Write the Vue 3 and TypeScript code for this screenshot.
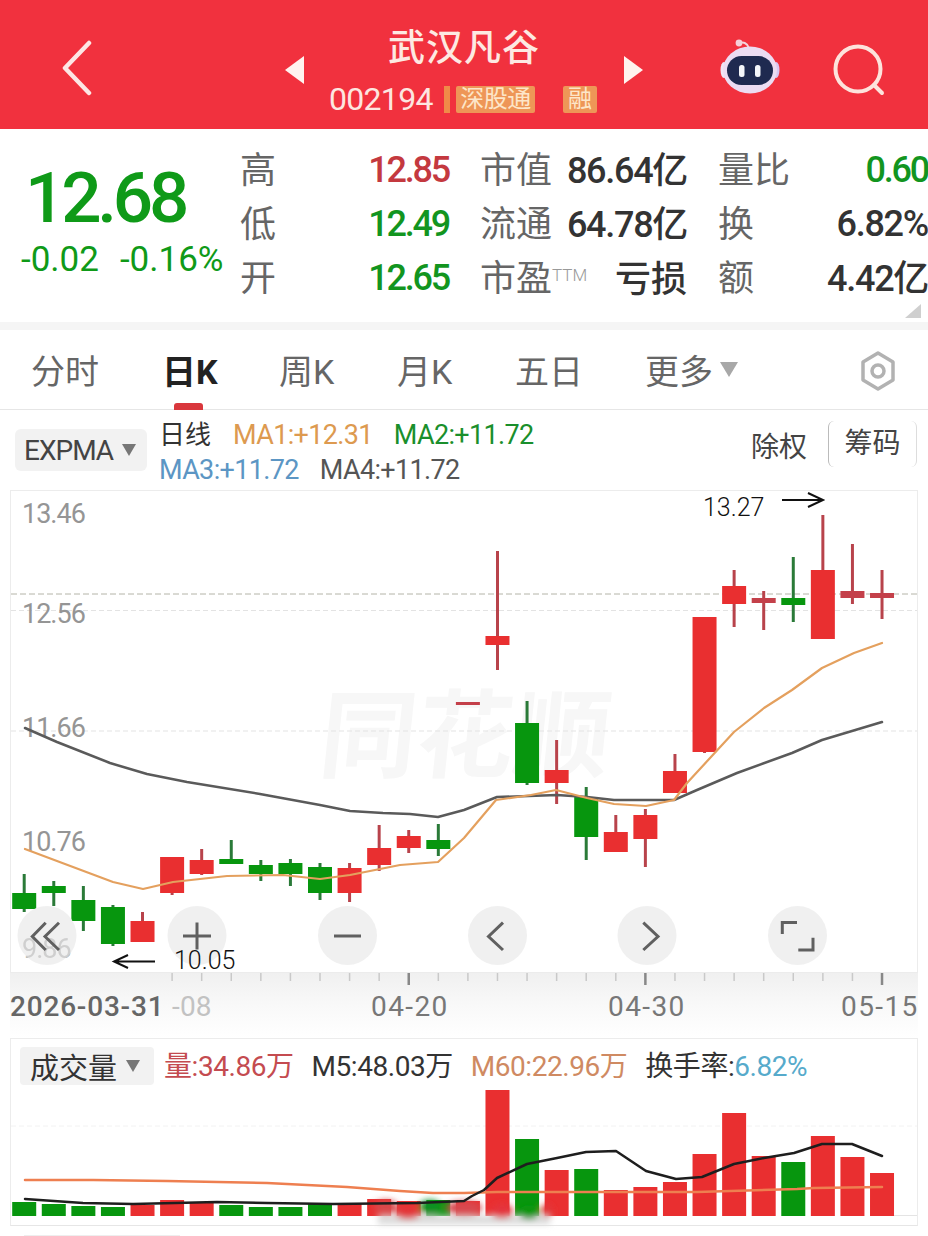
<script setup lang="ts">
type Kind = "up" | "down";
// [kind, wick top, body top, body bottom, wick bottom], page y coordinates
type Candle = [Kind, number, number, number, number];

const candles: Candle[] = [
  ["down", 874, 893, 909, 912],
  ["down", 881, 886, 893, 906],
  ["down", 886, 900, 921, 931],
  ["down", 905, 907, 944, 946],
  ["up", 912, 921, 942, 942],
  ["up", 857, 857, 893, 895],
  ["up", 849, 860, 874, 875],
  ["down", 840, 859, 864, 864],
  ["down", 860, 865, 874, 881],
  ["down", 859, 863, 874, 886],
  ["down", 863, 867, 893, 900],
  ["up", 863, 868, 893, 902],
  ["up", 825, 848, 865, 871],
  ["up", 830, 836, 848, 853],
  ["down", 824, 840, 849, 856],
  ["up", 702, 702, 705, 705],
  ["up", 551, 636, 645, 670],
  ["down", 701, 723, 783, 785],
  ["up", 740, 770, 783, 804],
  ["down", 787, 797, 837, 860],
  ["up", 815, 832, 852, 852],
  ["up", 809, 815, 839, 867],
  ["up", 754, 771, 793, 793],
  ["up", 617, 617, 752, 753],
  ["up", 570, 586, 604, 627],
  ["up", 591, 598, 603, 630],
  ["down", 557, 598, 605, 622],
  ["up", 515, 570, 639, 639],
  ["up", 544, 591, 598, 604],
  ["up", 570, 593, 598, 619],
];

const volumeTops = [
  1202, 1204, 1206, 1207, 1205, 1200, 1203, 1205, 1207, 1207, 1204, 1203, 1199, 1201, 1200, 1201,
  1090, 1139, 1170, 1169, 1190, 1187, 1182, 1154, 1113, 1156, 1162, 1136, 1157, 1173,
];
const volumeDown = new Set([0, 1, 2, 3, 7, 8, 9, 10, 14, 17, 19, 26]);

const step = 29.58;
const candleX = (i: number) => 24.2 + step * i;

const expOrange =
  "25,849 113,882 143,889 173,882 227,876 283,875 320,879 350,875 400,865 438,862 464,838 496,800 531,795 556,790 587,798 614,804 646,806 674,800 687,783 734,732 764,708 792,690 822,668 854,653 882,643";
const expGray =
  "25,728 57,742 110,763 147,774 187,782 260,794 320,805 350,811 383,813 410,814 438,817 464,810 497,797 557,795 587,797 614,800 674,800 697,790 737,773 792,753 822,740 882,722";
const volOrange =
  "25,1180 93,1180 167,1181 267,1183 347,1187 400,1191 433,1193 464,1193 497,1192 597,1192 697,1192 797,1189 814,1188 882,1187";
const volBlack =
  "25,1199 83,1203 133,1204 217,1202 267,1203 333,1204 417,1203 464,1201 472,1196 484,1190 497,1178 527,1164 557,1158 586,1152 616,1151 646,1171 676,1179 702,1177 734,1164 764,1158 794,1153 822,1144 852,1144 882,1156";

const priceLabels = [
  { text: "13.46", y: 523 },
  { text: "12.56", y: 623 },
  { text: "11.66", y: 737 },
  { text: "10.76", y: 851 },
];

const circleButtons = [47, 197, 347.5, 497.5, 647, 797.5];

const stats = [
  { label: "高", value: "12.85", tone: "red" },
  { label: "市值", value: "86.64亿", tone: "yi" },
  { label: "量比", value: "0.60", tone: "green" },
  { label: "低", value: "12.49", tone: "green" },
  { label: "流通", value: "64.78亿", tone: "yi" },
  { label: "换", value: "6.82%", tone: "dark" },
  { label: "开", value: "12.65", tone: "green" },
  { label: "市盈", sup: "TTM", value: "亏损", tone: "loss" },
  { label: "额", value: "4.42亿", tone: "yi" },
];

const tabs = [
  { text: "分时" },
  { text: "日K", active: true },
  { text: "周K" },
  { text: "月K" },
  { text: "五日" },
  { text: "更多", caret: true },
];

const ticks = Array.from({ length: 25 }, (_, i) => i + 5);
const majorTicks = new Set([13, 21, 29]);
</script>

<template>
  <div class="page">
    <header class="topbar">
      <div class="topbar__left">
        <svg class="back" width="34" height="56" viewBox="0 0 34 56">
          <path d="M29 3 5 28l24 25" fill="none" stroke="#fde6e4" stroke-width="4.5" stroke-linecap="round" stroke-linejoin="round" />
        </svg>
      </div>
      <div class="stock">
        <span class="tri tri--left" />
        <div class="stock__stack">
          <div class="stock__name">武汉凡谷</div>
          <div class="stock__meta">
            <span class="stock__code">002194</span>
            <span class="stock__bar" />
            <span class="tag tag--wide">深股通</span>
            <span class="tag tag--short">融</span>
          </div>
        </div>
        <span class="tri tri--right" />
      </div>
      <div class="topbar__right">
        <svg class="robot" width="62" height="58" viewBox="0 0 62 58">
          <path d="M20 6c4-3 8-1 10 4" fill="none" stroke="#f3d4dc" stroke-width="2" />
          <circle cx="20" cy="5" r="3.4" fill="#f6cfd8" />
          <ellipse cx="5" cy="32" rx="3.5" ry="8" fill="#f0e4f4" />
          <ellipse cx="57" cy="32" rx="3.5" ry="8" fill="#d9c6f2" />
          <ellipse cx="31" cy="32" rx="27" ry="23.5" fill="#ecdcf2" />
          <rect x="8" y="18" width="46" height="29" rx="14.5" fill="#1f2a50" />
          <rect x="20" y="27" width="5.5" height="12" rx="2.5" fill="#f4f6fa" />
          <rect x="36" y="27" width="5.5" height="12" rx="2.5" fill="#f4f6fa" />
        </svg>
        <svg class="search" width="54" height="52" viewBox="0 0 54 52">
          <circle cx="26" cy="25" r="22.5" fill="none" stroke="#fde3dc" stroke-width="4" />
          <path d="M42 41 50 49" stroke="#fde3dc" stroke-width="4" stroke-linecap="round" />
        </svg>
      </div>
    </header>

    <section class="quote">
      <div class="quote__price">
        <div class="quote__last">12.68</div>
        <div class="quote__change">
          <span>-0.02</span>
          <span>-0.16%</span>
        </div>
      </div>
      <div class="stats">
        <div v-for="s in stats" :key="s.label" class="stat">
          <span class="stat__label">{{ s.label }}<sup v-if="s.sup">{{ s.sup }}</sup></span>
          <span class="stat__value" :class="'tone-' + s.tone">{{ s.value }}</span>
        </div>
      </div>
      <span class="quote__corner" />
    </section>

    <nav class="tabs">
      <div v-for="t in tabs" :key="t.text" class="tab" :class="{ 'tab--active': t.active }">
        {{ t.text }}<span v-if="t.caret" class="caret caret--tab" />
      </div>
      <svg class="gear" width="40" height="40" viewBox="0 0 40 40">
        <path d="M20 2 35 11v18l-15 9-15-9V11Z" fill="none" stroke="#b2b2b2" stroke-width="3.5" stroke-linejoin="round" />
        <circle cx="20" cy="20" r="6" fill="none" stroke="#b2b2b2" stroke-width="3.5" />
      </svg>
    </nav>

    <div class="legend">
      <div class="select select--exp">EXPMA<span class="caret" /></div>
      <div class="legend__lines">
        <div class="legend__row">
          <span class="legend__cn">日线</span>
          <span class="c-orange">MA1:+12.31</span>
          <span class="c-green">MA2:+11.72</span>
        </div>
        <div class="legend__row">
          <span class="c-blue">MA3:+11.72</span>
          <span class="c-gray">MA4:+11.72</span>
        </div>
      </div>
      <div class="legend__right">
        <span class="legend__adj">除权</span>
        <span class="legend__chip">筹码</span>
      </div>
    </div>

    <div class="panel panel--kline">
      <svg class="plot" width="906" height="481" viewBox="11 491 906 481">
        <text x="318" y="770" class="watermark" textLength="290" lengthAdjust="spacingAndGlyphs" transform="skewX(-6) translate(80 0)">同花顺</text>

        <line x1="11" x2="917" y1="594" y2="594" class="grid grid--last" />
        <line x1="11" x2="917" y1="610.5" y2="610.5" class="grid" />
        <line x1="11" x2="917" y1="731" y2="731" class="grid" />

        <text v-for="p in priceLabels" :key="p.text" x="22" :y="p.y" class="axis-price">{{ p.text }}</text>
        <text x="22" y="958" class="axis-price axis-price--faded">9.86</text>

        <g v-for="(c, i) in candles" :key="i" :class="c[0]">
          <line :x1="candleX(i)" :x2="candleX(i)" :y1="c[1]" :y2="c[4]" class="wick" />
          <rect
            :x="candleX(i) - 12"
            :y="c[2]"
            width="24"
            :height="c[3] - c[2]"
            class="body"
            :class="{ 'body--thin': c[3] - c[2] < 8 }"
          />
        </g>

        <polyline :points="expGray" class="line line--gray" />
        <polyline :points="expOrange" class="line line--orange" />

        <g v-for="x in circleButtons" :key="x">
          <circle :cx="x" cy="935.5" r="29.5" class="btn-circle" />
        </g>
        <text x="22" y="958" class="axis-price axis-price--over">9.86</text>
        <g class="btn-icon">
          <path d="M45.7 922.7 32.3 936.5 45.7 950M59 922.7 45 936.5 59 950" />
          <path d="M183 936h28M197 922.5v27" />
          <path d="M334 936h27" />
          <path d="M503 922.7 488.5 936.5 503 950" />
          <path d="M643.3 922.7 658 936.5 643.3 950" />
          <path d="M782.3 934V922.5H797M798.3 950H813V937.7" />
        </g>

        <text x="703" y="516" class="note">13.27</text>
        <path d="M782 500h40M808 493l15 7-15 7" class="note-arrow" />
        <text x="174" y="968.5" class="note">10.05</text>
        <path d="M155 961.5h-40M128 955l-14 6.5 14 6.5" class="note-arrow" />
      </svg>
    </div>

    <div class="xaxis">
      <svg width="908" height="65" viewBox="10 973 908 65">
        <line
          v-for="i in ticks"
          :key="i"
          :x1="candleX(i)"
          :x2="candleX(i)"
          y1="973"
          :y2="majorTicks.has(i) ? 985 : 981"
          :class="majorTicks.has(i) ? 'tick tick--major' : 'tick'"
        />
        <text x="10" y="1016" class="date date--first">2026-03-31</text>
        <text x="172" y="1016" class="date date--faded">-08</text>
        <text x="371" y="1016" class="date">04-20</text>
        <text x="608" y="1016" class="date">04-30</text>
        <text x="841" y="1016" class="date">05-15</text>
      </svg>
    </div>

    <div class="panel panel--volume">
      <div class="vol-head">
        <div class="select select--vol">成交量<span class="caret" /></div>
        <div class="vol-head__items">
          <span class="c-volred">量:34.86万</span>
          <span class="c-dark">M5:48.03万</span>
          <span class="c-volorange">M60:22.96万</span>
          <span class="c-dark">换手率:<span class="c-turn">6.82%</span></span>
        </div>
      </div>
      <svg class="plot" width="906" height="136" viewBox="11 1089 906 136">
        <defs>
          <filter id="smudge" x="-20%" y="-60%" width="140%" height="220%">
            <feGaussianBlur stdDeviation="3" />
          </filter>
        </defs>
        <line x1="11" x2="917" y1="1126" y2="1126" class="grid grid--soft" />
        <line x1="880" x2="917" y1="1215.5" y2="1215.5" class="grid-base" />
        <rect
          v-for="(top, i) in volumeTops"
          :key="i"
          :x="candleX(i) - 12"
          :y="top"
          width="24"
          :height="1216 - top"
          :fill="volumeDown.has(i) ? '#07960e' : '#e92f30'"
        />
        <g filter="url(#smudge)">
          <rect x="378" y="1216" width="172" height="8" fill="#d8d8d8" />
          <ellipse cx="386" cy="1207" rx="12" ry="7" fill="#d9484c" />
          <ellipse cx="408" cy="1213" rx="12" ry="6" fill="#e2383a" />
          <ellipse cx="430" cy="1207" rx="11" ry="7" fill="#0e8f24" />
          <ellipse cx="464" cy="1208" rx="18" ry="7" fill="#d84a50" />
          <ellipse cx="502" cy="1211" rx="11" ry="7" fill="#e4363c" />
          <ellipse cx="529" cy="1212" rx="10" ry="7" fill="#07960e" />
          <ellipse cx="547" cy="1210" rx="6" ry="6" fill="#e2383a" />
        </g>
        <polyline :points="volOrange" class="line line--vol-orange" />
        <polyline :points="volBlack" class="line line--vol-black" />
      </svg>
    </div>
    <div class="next-edge" />
  </div>
</template>

<style>
html,
body {
  margin: 0;
  background: #fff;
}
</style>

<style scoped>
.page {
  width: 928px;
  height: 1236px;
  overflow: hidden;
  position: relative;
  background: #fff;
  font-family: Roboto, "Noto Sans CJK SC", sans-serif;
  color: #333;
}

.topbar {
  height: 129px;
  background: #f1313e;
  display: grid;
  grid-template-columns: 1fr auto 1fr;
  align-items: flex-start;
}

.topbar__left {
  padding: 40px 0 0 60px;
}

.topbar__right {
  display: flex;
  justify-content: flex-end;
  gap: 51px;
  padding: 38px 42px 0 0;
}

.back,
.robot,
.search {
  display: block;
}

.search {
  margin-top: 6px;
}

.stock {
  display: flex;
  align-items: center;
  gap: 27px;
  margin-top: 26px;
}

.tri {
  width: 0;
  height: 0;
  border-top: 14px solid transparent;
  border-bottom: 14px solid transparent;
}

.tri--left {
  border-right: 19px solid #fff3ef;
}

.tri--right {
  border-left: 19px solid #fff3ef;
}

.stock__stack {
  width: 266px;
}

.stock__name {
  height: 42px;
  line-height: 46px;
  margin-bottom: 18px;
  text-align: center;
  color: #fde9e2;
  font-size: 37px;
  font-weight: 500;
  letter-spacing: 1px;
  white-space: nowrap;
}

.stock__meta {
  display: flex;
  align-items: center;
  height: 27px;
}

.stock__code {
  color: #fde6e0;
  font-size: 32px;
  line-height: 27px;
  letter-spacing: -0.7px;
  width: 113px;
  margin-left: -2px;
  padding-right: 2px;
}

.stock__bar {
  width: 6px;
  height: 27px;
  background: #f08a48;
  margin-right: 6px;
}

.tag {
  height: 27px;
  line-height: 27px;
  text-align: center;
  background: #ee9657;
  color: #fde6c9;
  font-size: 24px;
  border-radius: 2px;
}

.tag--wide {
  width: 79px;
  letter-spacing: -0.5px;
  white-space: nowrap;
  margin-right: 28px;
}

.tag--short {
  width: 34px;
}

.quote {
  position: relative;
  height: 193px;
  display: flex;
  border-bottom: 8px solid #f5f5f5;
}

.quote__price {
  width: 241px;
  flex: none;
  color: #0f9a18;
}

.quote__last {
  margin: 34px 0 0 25px;
  height: 70px;
  line-height: 70px;
  font-size: 71px;
  font-weight: 500;
  letter-spacing: -4.2px;
}

.quote__change {
  display: flex;
  gap: 21px;
  margin: 7px 0 0 21px;
  height: 40px;
  line-height: 40px;
  font-size: 35px;
  white-space: nowrap;
}

.stats {
  display: grid;
  grid-template-columns: 208px 206px 209px;
  grid-auto-rows: 54px;
  column-gap: 32px;
  padding-top: 14px;
}

.stat {
  display: flex;
  align-items: center;
  justify-content: space-between;
  white-space: nowrap;
}

.stat__label {
  font-size: 36px;
  color: #666;
  margin-bottom: 7px;
  margin-left: -1px;
}

.stat__label sup {
  font-size: 17px;
  font-weight: 300;
  color: #999;
  vertical-align: 10px;
  line-height: 0;
}

.stat__value {
  font-size: 36px;
  font-weight: 500;
  letter-spacing: -2.2px;
}

.tone-red {
  color: #c4393f;
}

.tone-green {
  color: #12951f;
}

.tone-dark {
  color: #333;
  letter-spacing: -1.3px;
}

.tone-yi {
  color: #333;
  letter-spacing: -1.3px;
  margin-bottom: 7px;
}

.tone-loss {
  color: #333;
  letter-spacing: 0;
  margin-bottom: 4px;
}

.quote__corner {
  position: absolute;
  right: 7px;
  bottom: 4px;
  width: 0;
  height: 0;
  border-left: 16px solid transparent;
  border-bottom: 14px solid #cfcfcf;
}

.tabs {
  position: relative;
  display: grid;
  grid-template-columns: 131px 117px 118px 118px 130px 1fr;
  height: 80px;
  padding-left: 31px;
  align-items: center;
  box-sizing: border-box;
  border-bottom: 1px solid #e6e6e6;
  font-size: 34px;
  color: #666;
}

.tab {
  position: relative;
  white-space: nowrap;
  display: flex;
  align-items: center;
  margin-top: -1px;
}

.tab--active {
  color: #222;
  font-weight: 700;
}

.tab--active::after {
  content: "";
  position: absolute;
  left: 12px;
  bottom: -16px;
  width: 29px;
  height: 7px;
  border-radius: 3px 3px 0 0;
  background: #d9373c;
}

.caret {
  display: inline-block;
  width: 0;
  height: 0;
  border-left: 7.5px solid transparent;
  border-right: 7.5px solid transparent;
  border-top: 12px solid #777;
}

.caret--tab {
  margin-left: 7px;
  border-left-width: 9px;
  border-right-width: 9px;
  border-top: 15px solid #a8a8a8;
}

.gear {
  position: absolute;
  left: 858px;
  top: 21px;
}

.legend {
  height: 80px;
  display: flex;
  position: relative;
}

.select {
  display: flex;
  align-items: center;
  background: #f2f2f2;
  border-radius: 6px;
  white-space: nowrap;
  box-sizing: border-box;
}

.select--exp {
  width: 132px;
  height: 42px;
  margin: 19px 0 0 15px;
  padding-left: 9px;
  font-size: 28px;
  letter-spacing: -1px;
  color: #444;
  gap: 9px;
}

.legend__lines {
  margin-left: 12px;
  padding-top: 7px;
  font-size: 27px;
  letter-spacing: -0.65px;
}

.legend__row {
  display: flex;
  gap: 21px;
  height: 36px;
  line-height: 36px;
  white-space: nowrap;
}

.legend__row + .legend__row {
  height: 34px;
  line-height: 34px;
}

.legend__cn {
  color: #333;
  font-size: 26px;
  letter-spacing: 0;
  margin-right: 1px;
}

.c-orange {
  color: #dd9a50;
}

.c-green {
  color: #1a8f2c;
}

.c-blue {
  color: #5c96c4;
}

.c-gray {
  color: #555;
}

.legend__right {
  position: absolute;
  right: 11px;
  top: 11px;
  display: flex;
  align-items: center;
  gap: 21px;
  font-size: 28px;
  color: #444;
}

.legend__adj {
  margin-top: 2px;
}

.legend__chip {
  width: 89px;
  height: 46px;
  line-height: 46px;
  text-align: center;
  box-sizing: border-box;
  border-left: 1px solid #bbb;
  border-right: 1px solid #ddd;
  border-radius: 6px;
}

.panel {
  margin-left: 10px;
  width: 908px;
  box-sizing: border-box;
  border: 1px solid #ececec;
}

.panel--kline {
  height: 483px;
}

.plot {
  display: block;
  overflow: visible;
}

.watermark {
  font-family: "Noto Sans CJK SC", sans-serif;
  font-size: 96px;
  font-weight: 700;
  fill: #f7f7f7;
}

.grid {
  stroke: #e3e3e3;
  stroke-width: 1;
  stroke-dasharray: 5 3;
}

.grid--last {
  stroke: #b4b4a8;
  stroke-dasharray: 6 3;
}

.grid--soft {
  stroke: #f2f2f2;
}

.grid-base {
  stroke: #e4e4e4;
}

.axis-price {
  font-size: 27px;
  letter-spacing: -1px;
  fill: #959595;
}

.axis-price--faded {
  fill: #aaa;
}

.axis-price--over {
  fill: #c4c4c4;
  opacity: 0.7;
}

.wick {
  stroke-width: 3;
}

.up .wick {
  stroke: #b8434b;
}

.down .wick {
  stroke: #2a7a38;
}

.up .body {
  fill: #e92f30;
}

.up .body--thin {
  fill: #c4404a;
}

.down .body {
  fill: #07960e;
}

.line {
  fill: none;
  stroke-linejoin: round;
  stroke-linecap: round;
}

.line--gray {
  stroke: #5a5a5a;
  stroke-width: 2.5;
}

.line--orange {
  stroke: #e4a05e;
  stroke-width: 2.2;
}

.line--vol-orange {
  stroke: #ee7f50;
  stroke-width: 2.5;
}

.line--vol-black {
  stroke: #1e1e1e;
  stroke-width: 2.5;
}

.btn-circle {
  fill: #efefef;
  opacity: 0.95;
}

.btn-icon path {
  fill: none;
  stroke: #606060;
  stroke-width: 3;
}

.note {
  font-size: 25px;
  font-weight: 300;
  fill: #111;
}

.note-arrow {
  fill: none;
  stroke: #111;
  stroke-width: 2;
}

.xaxis {
  height: 65px;
  margin-left: 10px;
  width: 908px;
  background: linear-gradient(#f0f0f0, #f8f8f8 45%, #fff 100%);
}

.xaxis svg {
  display: block;
}

.tick {
  stroke: #c9c9c9;
  stroke-width: 1.5;
}

.tick--major {
  stroke: #888;
  stroke-width: 2.5;
}

.date {
  font-size: 28px;
  letter-spacing: 1.4px;
  fill: #777;
}

.date--first {
  fill: #666;
  font-weight: 500;
  letter-spacing: 0.8px;
}

.date--faded {
  fill: #c2c2c2;
  letter-spacing: 0.2px;
}

.panel--volume {
  height: 188px;
  border-bottom-color: #e6e6e6;
}

.vol-head {
  height: 50px;
  display: flex;
  align-items: flex-start;
  white-space: nowrap;
}

.select--vol {
  width: 134px;
  height: 38px;
  margin: 8px 0 0 9px;
  padding-left: 10px;
  gap: 9px;
  font-size: 29px;
  color: #333;
  border-radius: 4px;
}

.vol-head__items {
  display: flex;
  gap: 18px;
  margin: 9px 0 0 10px;
  height: 38px;
  line-height: 38px;
  font-size: 28px;
  letter-spacing: -0.45px;
}

.c-volred {
  color: #c44b50;
}

.c-dark {
  color: #333;
}

.c-volorange {
  color: #cf8a62;
}

.c-turn {
  color: #56aacb;
}

.next-edge {
  position: absolute;
  left: 24px;
  top: 1235px;
  width: 156px;
  height: 1px;
  background: #eee;
}
</style>
